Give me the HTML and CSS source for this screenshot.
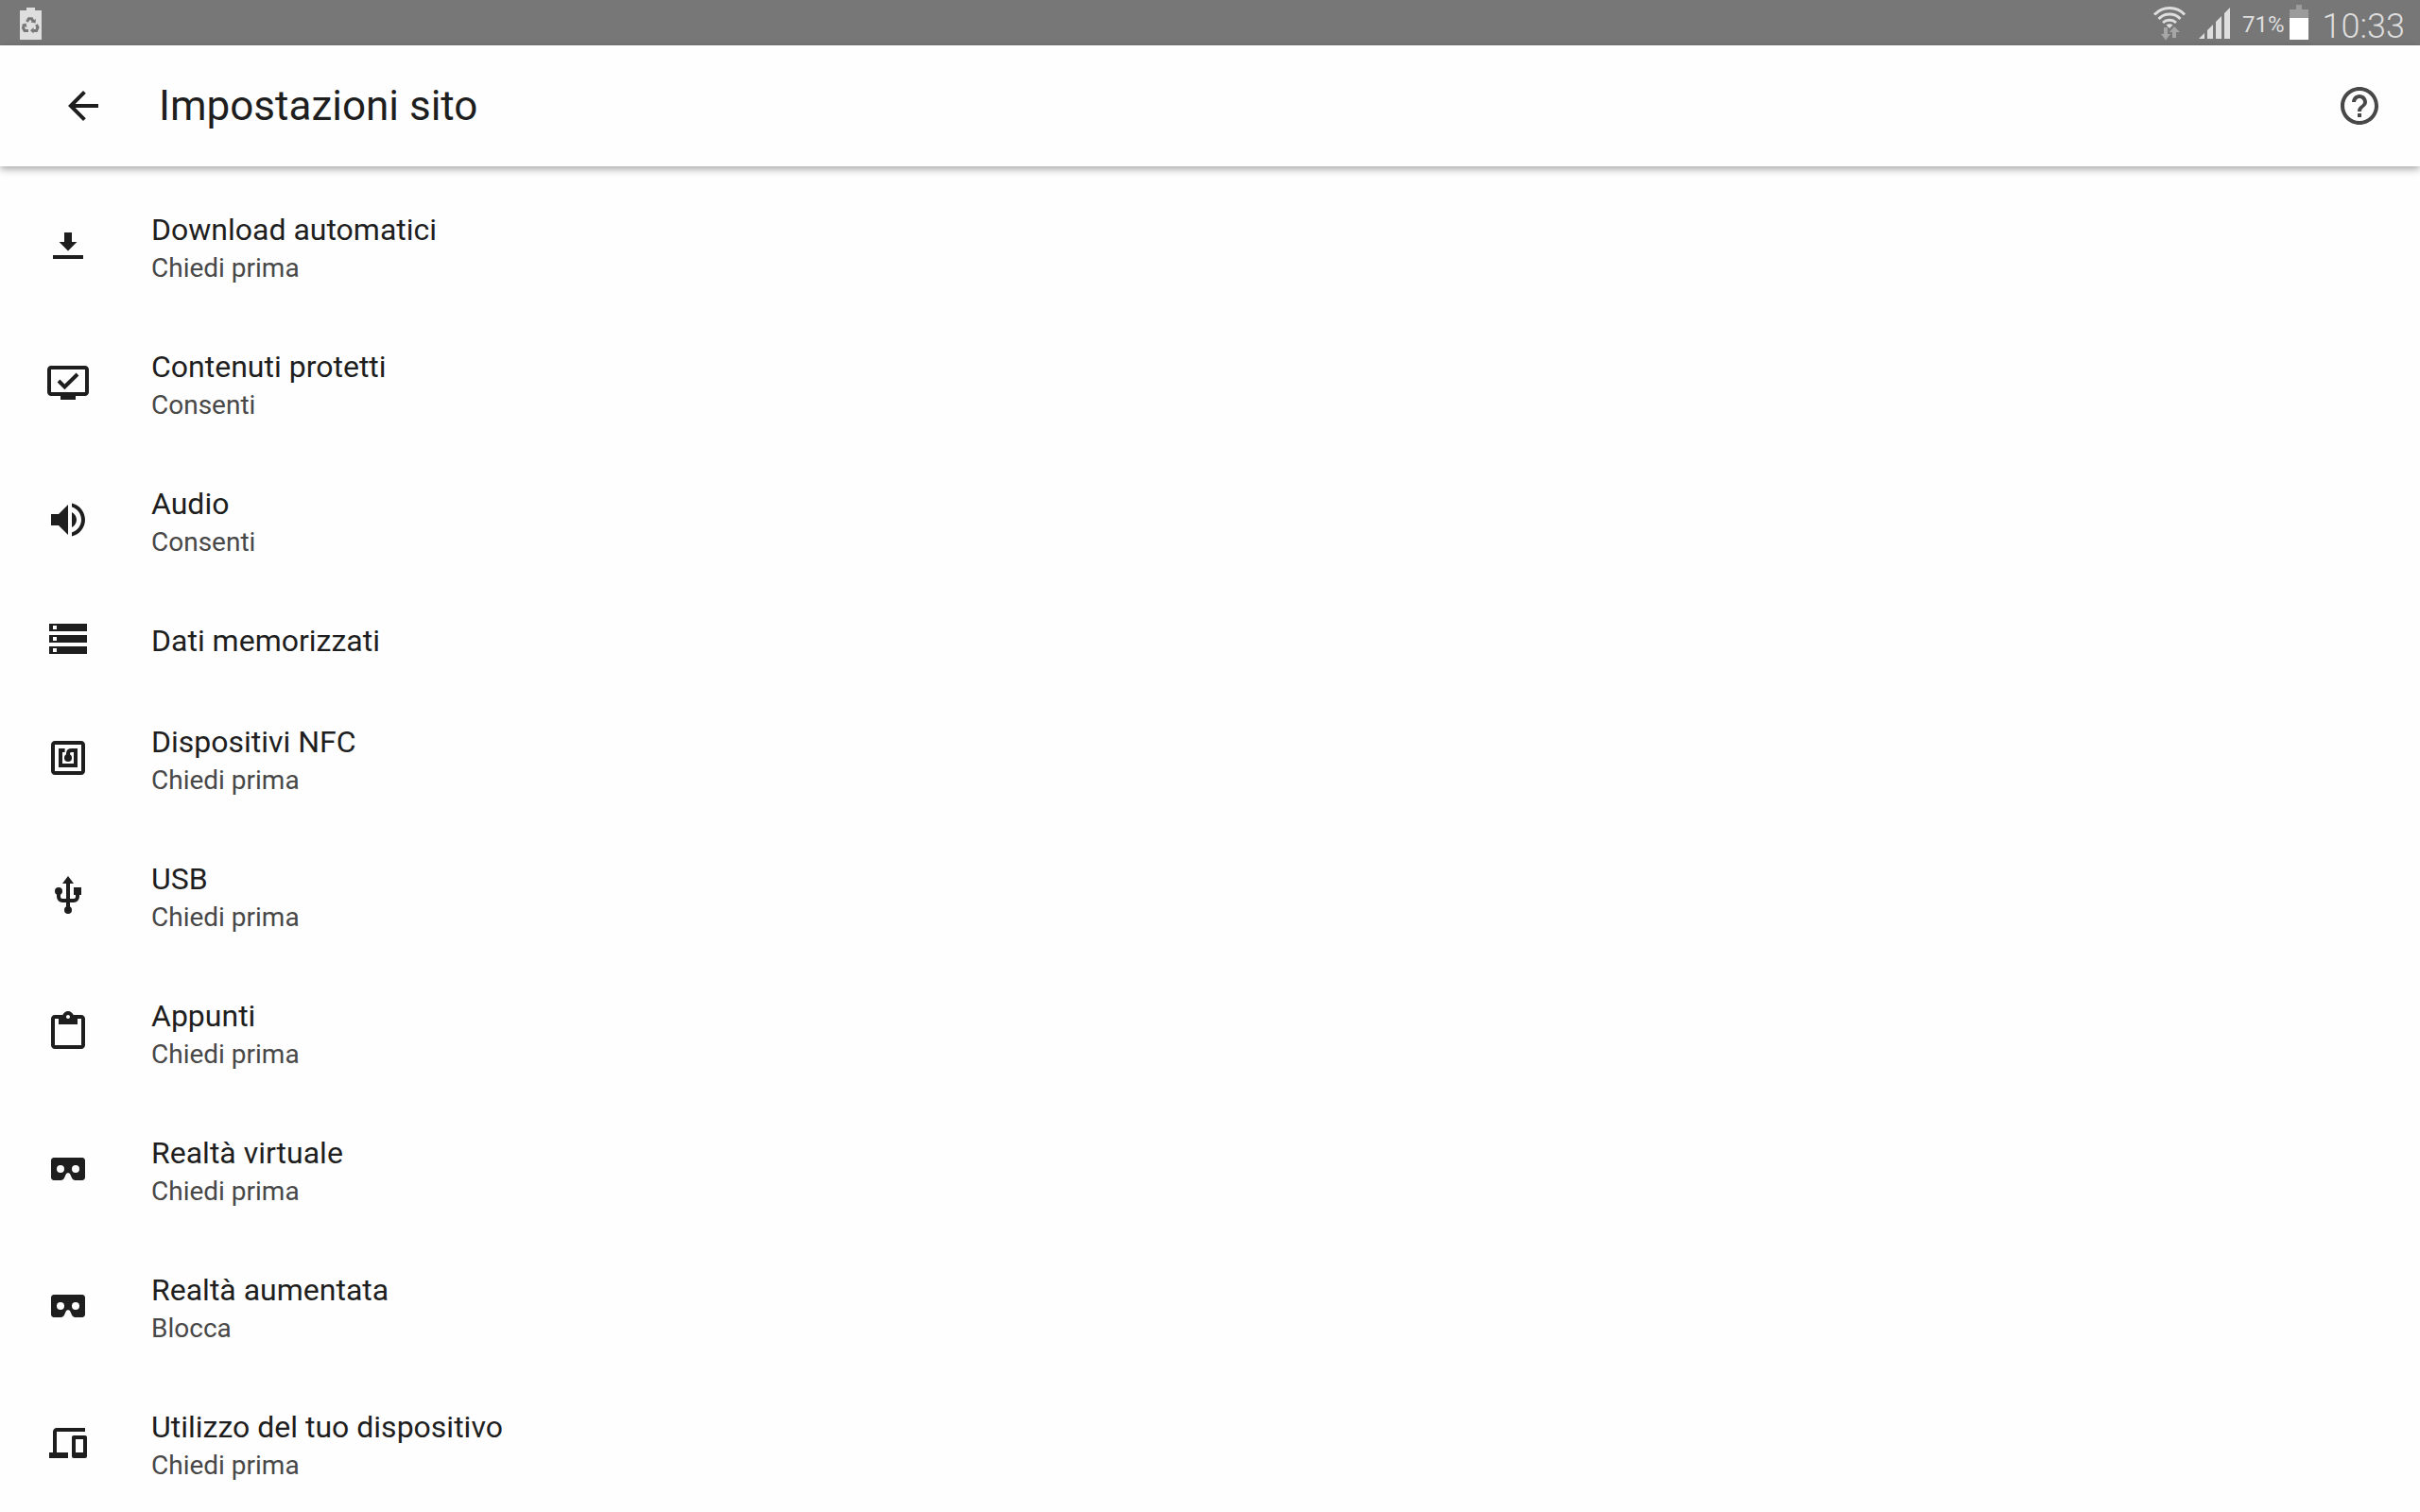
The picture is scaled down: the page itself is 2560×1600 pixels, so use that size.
FILE: index.html
```html
<!DOCTYPE html>
<html lang="it">
<head>
  <meta charset="UTF-8" />
  <meta name="viewport" content="width=device-width, initial-scale=1.0"/>
  <title>Impostazioni sito</title>
  <link rel="stylesheet" href="styles.css">
</head>
<body>
  <div class="status-bar">
    <svg class="status-icon" width="24" height="48" viewBox="0 0 24 48">
      <path fill="#dedede" d="M1 11h7V8h9v3h7v31H1z"/>
      <g fill="none" stroke="#777" stroke-width="3">
        <path d="M8.5 23l2-3.3h3l1.8 3"/>
        <path d="M5.500 26l-1 3.500 1.500 3h4"/>
        <path d="M18.500 26l1.500 3-1.500 3.500h-4"/>
      </g>
      <path fill="#777" d="M12.500 23.500l5 1 .5-4.500zM3 26l4.500-1.500 1 4.500zM15.500 29v6.500L12 32.300z"/>
    </svg>
    <div class="status-right">
      <svg class="status-icon wifi" width="36" height="48" viewBox="0 0 36 48">
        <g fill="none" stroke="#dedede" stroke-width="3">
          <path d="M2 15.500a22 22 0 0 1 32 0"/>
          <path d="M6.500 20a16 16 0 0 1 23 0"/>
          <path d="M11 24a10.500 10.500 0 0 1 14 0"/>
        </g>
        <path fill="#dedede" d="M14.500 26.500q3.500-2.500 7 0L18 30z"/>
        <path fill="#a6a6a6" d="M12 29h4v7h3l-5 6.500L9 36h3zM21 40h4v-6h4l-6-6-5 6h3z"/>
      </svg>
      <svg class="status-icon signal" width="34" height="48" viewBox="0 0 34 48">
        <path fill="#dedede" d="M0 41l6-6v6zM9 41V32l6-6v15zM18 41V23l6-6v24zM27 41V14l6-6v33z"/>
      </svg>
      <span class="battery-level">71%</span>
      <svg class="status-icon" width="20" height="48" viewBox="0 0 20 48">
        <path fill="#9b9b9b" d="M0 10h7V5h6v5h7v9H0z"/>
        <path fill="#fff" d="M0 19h20v23H0z"/>
      </svg>
      <span class="clock">10:33</span>
    </div>
  </div>

  <header class="toolbar">
    <button class="icon-btn" type="button" aria-label="Indietro">
      <svg class="icon" viewBox="0 0 24 24"><path d="M20 11H7.830l5.590-5.590L12 4l-8 8 8 8 1.410-1.410L7.830 13H20v-2z"/></svg>
    </button>
    <h1>Impostazioni sito</h1>
    <button class="icon-btn help" type="button" aria-label="Guida">
      <svg class="icon" viewBox="0 0 24 24"><path d="M11 18h2v-2h-2v2zm1-16C6.480 2 2 6.480 2 12s4.480 10 10 10 10-4.480 10-10S17.520 2 12 2zm0 18c-4.410 0-8-3.590-8-8s3.590-8 8-8 8 3.590 8 8-3.590 8-8 8zm0-14c-2.210 0-4 1.790-4 4h2c0-1.100.9-2 2-2s2 .9 2 2c0 2-3 1.750-3 5h2c0-2.250 3-2.500 3-5 0-2.210-1.790-4-4-4z"/></svg>
    </button>
  </header>

  <main>
    <ul class="settings">
      <li>
        <a class="row" href="#download">
          <svg class="icon" viewBox="0 0 24 24"><path d="M4 19h16v-2H4v2zM10 5h4v5h2.700L12 14.700 7.300 10H10z"/></svg>
          <span class="row-text">
            <span class="title">Download automatici</span>
            <span class="summary">Chiedi prima</span>
          </span>
        </a>
      </li>
      <li>
        <a class="row" href="#protetti">
          <svg class="icon" viewBox="0 0 24 24"><path d="M21 3H3c-1.100 0-2 .9-2 2v12c0 1.100.9 2 2 2h5v2h8v-2h5c1.100 0 2-.9 2-2V5c0-1.100-.9-2-2-2zm0 14H3V5h18v12z"/><path d="M17.700 8.200l-1.400-1.400-6.100 6-2.500-2.500-1.400 1.400 3.900 3.900z"/></svg>
          <span class="row-text">
            <span class="title">Contenuti protetti</span>
            <span class="summary">Consenti</span>
          </span>
        </a>
      </li>
      <li>
        <a class="row" href="#audio">
          <svg class="icon" viewBox="0 0 24 24"><path d="M3 9v6h4l5 5V4L7 9H3zm13.500 3c0-1.770-1.020-3.290-2.500-4.030v8.050c1.480-.73 2.500-2.250 2.500-4.020zM14 3.230v2.060c2.890.86 5 3.540 5 6.710s-2.110 5.850-5 6.710v2.060c4.010-.91 7-4.490 7-8.770s-2.990-7.860-7-8.770z"/></svg>
          <span class="row-text">
            <span class="title">Audio</span>
            <span class="summary">Consenti</span>
          </span>
        </a>
      </li>
      <li>
        <a class="row" href="#dati">
          <svg class="icon" viewBox="0 0 24 24"><path d="M2 20h20v-4H2v4zm2-3h2v2H4v-2zM2 4v4h20V4H2zm4 3H4V5h2v2zm-4 7h20v-4H2v4zm2-3h2v2H4v-2z"/></svg>
          <span class="row-text">
            <span class="title">Dati memorizzati</span>
          </span>
        </a>
      </li>
      <li>
        <a class="row" href="#nfc">
          <svg class="icon" viewBox="0 0 24 24">
            <path d="M19 3H5c-1.100 0-2 .9-2 2v14c0 1.100.9 2 2 2h14c1.100 0 2-.9 2-2V5c0-1.100-.9-2-2-2zm0 16H5V5h14v14z"/>
            <path class="line" d="M10.300 8H8v8h8V8h-2c-1.200 0-2 .6-2 1.700V12"/>
            <circle cx="12" cy="12" r="2"/>
          </svg>
          <span class="row-text">
            <span class="title">Dispositivi NFC</span>
            <span class="summary">Chiedi prima</span>
          </span>
        </a>
      </li>
      <li>
        <a class="row" href="#usb">
          <svg class="icon" viewBox="0 0 24 24">
            <path class="line" d="M12 5v15M7 10v3c0 1.100.9 2 2 2h6c1.100 0 2-.9 2-2v-2"/>
            <path d="M12 2l3 4H9zM15 8h4v4h-4z"/>
            <circle cx="7" cy="10" r="2"/>
            <circle cx="12" cy="20" r="2"/>
          </svg>
          <span class="row-text">
            <span class="title">USB</span>
            <span class="summary">Chiedi prima</span>
          </span>
        </a>
      </li>
      <li>
        <a class="row" href="#appunti">
          <svg class="icon" viewBox="0 0 24 24"><path d="M19 3h-4.180C14.400 1.840 13.300 1 12 1s-2.400.84-2.820 2H5c-1.100 0-2 .9-2 2v14c0 1.100.9 2 2 2h14c1.100 0 2-.9 2-2V5c0-1.100-.9-2-2-2zm-7 0c.55 0 1 .45 1 1s-.45 1-1 1-1-.45-1-1 .45-1 1-1zm7 16H5V5h2v3h10V5h2v14z"/></svg>
          <span class="row-text">
            <span class="title">Appunti</span>
            <span class="summary">Chiedi prima</span>
          </span>
        </a>
      </li>
      <li>
        <a class="row" href="#vr">
          <svg class="icon" viewBox="0 0 24 24"><path fill-rule="evenodd" d="M19.500 6h-15C3.700 6 3 6.700 3 7.500v9c0 .8.7 1.500 1.500 1.500h3.700c.8 0 1.500-.5 1.800-1.200l.9-2c.4-.9 1.800-.9 2.200 0l.9 2c.3.7 1 1.200 1.800 1.200h3.700c.8 0 1.500-.7 1.500-1.500v-9c0-.8-.7-1.500-1.500-1.500zM8 14a2 2 0 1 1 0-4 2 2 0 0 1 0 4zm8 0a2 2 0 1 1 0-4 2 2 0 0 1 0 4z"/></svg>
          <span class="row-text">
            <span class="title">Realtà virtuale</span>
            <span class="summary">Chiedi prima</span>
          </span>
        </a>
      </li>
      <li>
        <a class="row" href="#ar">
          <svg class="icon" viewBox="0 0 24 24"><path fill-rule="evenodd" d="M19.500 6h-15C3.700 6 3 6.700 3 7.500v9c0 .8.7 1.500 1.500 1.500h3.700c.8 0 1.500-.5 1.800-1.200l.9-2c.4-.9 1.800-.9 2.200 0l.9 2c.3.7 1 1.200 1.800 1.200h3.700c.8 0 1.500-.7 1.500-1.500v-9c0-.8-.7-1.500-1.500-1.500zM8 14a2 2 0 1 1 0-4 2 2 0 0 1 0 4zm8 0a2 2 0 1 1 0-4 2 2 0 0 1 0 4z"/></svg>
          <span class="row-text">
            <span class="title">Realtà aumentata</span>
            <span class="summary">Blocca</span>
          </span>
        </a>
      </li>
      <li>
        <a class="row" href="#dispositivo">
          <svg class="icon" viewBox="0 0 24 24"><path d="M6 6h15V4H6c-1.100 0-2 .9-2 2v11H2v3h10v-3H6V6zm15 2h-6c-.55 0-1 .45-1 1v10c0 .55.45 1 1 1h6c.55 0 1-.45 1-1V9c0-.55-.45-1-1-1zm-1 9h-4v-7h4v7z"/></svg>
          <span class="row-text">
            <span class="title">Utilizzo del tuo dispositivo</span>
            <span class="summary">Chiedi prima</span>
          </span>
        </a>
      </li>
    </ul>
  </main>
</body>
</html>
```
FILE: styles.css
```css
:root {
  --bg: #fefefe;
  --status-bg: #777777;
  --status-text: #dedede;
  --text: #1e1e1e;
  --text-muted: #484848;
  --font: Roboto, sans-serif;
}

* {
  box-sizing: border-box;
}

body {
  margin: 0;
  font-family: var(--font);
  background: var(--bg);
  color: var(--text);
}

.status-bar {
  display: flex;
  justify-content: space-between;
  height: 48px;
  padding: 0 16px 0 20px;
  background: var(--status-bg);
  color: var(--status-text);
}

.status-right {
  display: flex;
}

.status-icon {
  display: block;
}

.wifi {
  margin-right: 13px;
}

.signal {
  margin-right: 12px;
}

.battery-level {
  margin-right: 5px;
  padding-top: 4px;
  font-size: 24px;
  line-height: 44px;
}

.clock {
  margin-left: 15px;
  padding-top: 8px;
  font-size: 36px;
  font-weight: 300;
  line-height: 40px;
}

.toolbar {
  display: flex;
  align-items: center;
  height: 128px;
  padding: 0 40px 0 64px;
  background: var(--bg);
  box-shadow: 0 3px 8px rgba(0, 0, 0, 0.35);
}

.toolbar h1 {
  flex: 1;
  margin: 0 0 0 56px;
  font-size: 44px;
  font-weight: 400;
}

.icon-btn {
  padding: 0;
  border: none;
  background: none;
  color: var(--text);
  cursor: pointer;
}

.help {
  color: var(--text-muted);
}

.icon {
  display: block;
  flex: none;
  width: 48px;
  height: 48px;
  fill: currentColor;
}

.line {
  fill: none;
  stroke: currentColor;
  stroke-width: 2;
}

.settings {
  margin: 0;
  padding: 12px 0 0;
  list-style: none;
}

.row {
  display: flex;
  align-items: center;
  gap: 64px;
  padding: 0 48px;
  color: inherit;
  text-decoration: none;
}

.row .icon {
  margin-bottom: 1px;
}

.row-text {
  padding: 34px 0 30px;
}

.title,
.summary {
  display: block;
}

.title {
  font-size: 32px;
  line-height: 43px;
}

.summary {
  font-size: 28px;
  line-height: 38px;
  color: var(--text-muted);
}
```
